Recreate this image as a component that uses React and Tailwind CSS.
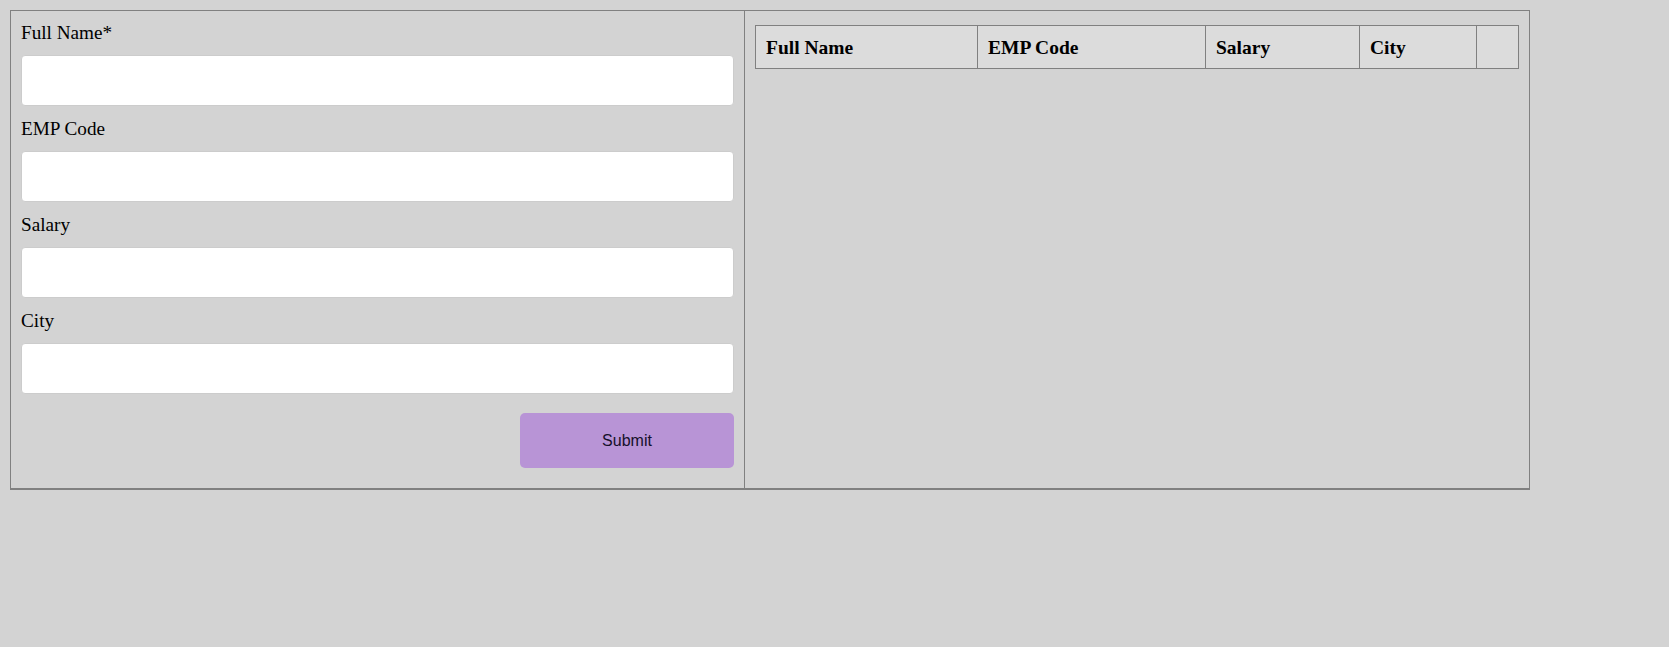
import React, { useState } from 'react';

const fields = [
  { id: 'fullName', label: 'Full Name*' },
  { id: 'empCode', label: 'EMP Code' },
  { id: 'salary', label: 'Salary' },
  { id: 'city', label: 'City' },
];

const columns = [
  { id: 'fullName', label: 'Full Name', w: 'w-[222px]' },
  { id: 'empCode', label: 'EMP Code', w: 'w-[228px]' },
  { id: 'salary', label: 'Salary', w: 'w-[154px]' },
  { id: 'city', label: 'City', w: 'w-[117px]' },
  { id: 'actions', label: '', w: 'w-[42px]' },
];

const App = () => {
  const [values, setValues] = useState({ fullName: '', empCode: '', salary: '', city: '' });
  const [rows, setRows] = useState([]);

  const handleChange = (id, v) => setValues({ ...values, [id]: v });

  const handleSubmit = (e) => {
    e.preventDefault();
    if (!values.fullName) return;
    setRows([...rows, values]);
    setValues({ fullName: '', empCode: '', salary: '', city: '' });
  };

  return (
    <div className="min-h-screen w-full bg-[#d3d3d3] pt-[10px] pl-[10px] font-['Liberation_Serif',serif] text-black">
      <div className="flex w-[1520px] border border-b-2 border-[#808080] bg-[#d3d3d3]">
        {/* form side */}
        <form onSubmit={handleSubmit} className="w-[734px] shrink-0 border-r border-[#808080] px-[10px] pt-[11px] pb-[20px]">
          {fields.map((f) => (
            <div key={f.id}>
              <label htmlFor={f.id} className="block text-[19.2px] leading-[22px] mb-[11px]">{f.label}</label>
              <input
                id={f.id}
                value={values[f.id]}
                onChange={(e) => handleChange(f.id, e.target.value)}
                className="block w-full h-[51px] mb-[12px] bg-white border border-[#cccccc] rounded-[4px] px-3 outline-none"
              />
            </div>
          ))}
          <div className="flex justify-end pt-[7px]">
            <button
              type="submit"
              className="w-[214px] h-[55px] rounded-[5px] bg-[#b894d6] text-[16px] text-[#15102a] font-['Liberation_Sans',Arial,sans-serif]"
            >
              Submit
            </button>
          </div>
        </form>

        {/* table side */}
        <div className="flex-1 px-[10px] pt-[14px]">
          <div className="flex w-[764px] border-t border-l border-[#808080]">
            {columns.map((c) => (
              <div
                key={c.id}
                className={`${c.w} h-[43px] flex items-center pl-[10px] pt-[2px] border-r border-b border-[#808080] bg-[#dcdcdc] font-bold text-[19.5px]`}
              >
                {c.label}
              </div>
            ))}
          </div>
          {rows.map((r, i) => (
            <div key={i} className="flex w-[764px] border-l border-[#808080]">
              {columns.map((c) => (
                <div key={c.id} className={`${c.w} h-[40px] flex items-center pl-[10px] border-r border-b border-[#808080] text-[18px]`}>
                  {c.id === 'actions' ? '' : r[c.id]}
                </div>
              ))}
            </div>
          ))}
        </div>
      </div>
    </div>
  );
};

export default App;
